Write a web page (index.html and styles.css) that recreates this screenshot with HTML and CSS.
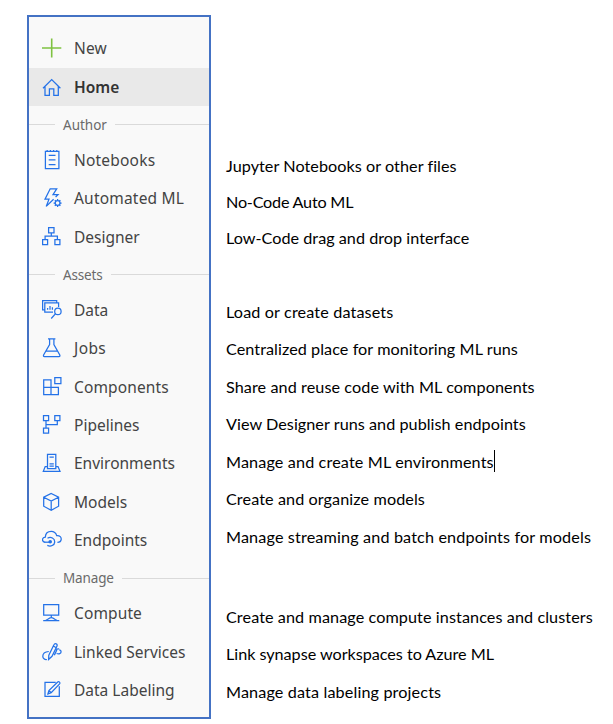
FILE: index.html
```html
<!DOCTYPE html>
<html lang="en">
<head>
<meta charset="utf-8">
<title>Machine Learning navigation</title>
<link rel="stylesheet" href="styles.css">
</head>
<body>
<main class="page">
  <nav class="sidebar">
    <a class="item"><svg class="icon icon-new" viewBox="0 0 20 20"><path d="M0 10H19.3M9.7.4V19.6"/></svg><span class="label w-new">New</span></a>
    <a class="item active"><svg class="icon" viewBox="0 0 20 20"><path d="M1 11.2 9.7 2.6l8.7 8.6M3 9.5v8.8h4.4v-6.5h4.4v6.5h4.5V9.5"/></svg><span class="label w-home">Home</span></a>
    <div class="section"><span class="w-author">Author</span></div>
    <a class="item"><svg class="icon" viewBox="0 0 20 20"><path d="M3.4 1.4H16.9V18.7H3.4zM6.7 5.3h6.8M6.7 9.8h6.8M6.7 14.5h6.8M5.2 0v2M8.4 0v2M11.6 0v2M14.8 0v2"/></svg><span class="label w-notebooks">Notebooks</span></a>
    <a class="item"><svg class="icon" viewBox="0 0 20 20"><path d="M11.6 11.2 4.2 18.4 7 11.2H3L8.2.8h6.5L11 6.6h5L13.6 9"/><circle cx="15.6" cy="15" r="2.4"/><path d="M15.6 11v1.6M15.6 17.4V19M11.6 15h1.6M18 15h1.6M12.8 12.2l1.1 1.1M17.3 16.7l1.1 1.1M18.4 12.2l-1.1 1.1M13.9 16.7l-1.1 1.1"/></svg><span class="label w-automl">Automated ML</span></a>
    <a class="item"><svg class="icon" viewBox="0 0 20 20"><path d="M6.6.7H12V5.9H6.6zM.6 12.7H5.6V17.7H.6zM12.9 12.7H17.9V17.7H12.9zM9.3 5.9V9M3.1 12.7V9H15.4v3.7"/></svg><span class="label w-designer">Designer</span></a>
    <div class="section"><span class="w-assets">Assets</span></div>
    <a class="item"><svg class="icon" viewBox="0 0 20 20"><path d="M2.7 9.8H.6V.7H14.7V2.8M11 12H2.8V2.8H16.6V7M5.6 9.8V8M8 9.8V6M10.4 9.8V7.3"/><circle cx="15.9" cy="11.4" r="3.2"/><path d="M13.6 13.7 9.2 18.5"/></svg><span class="label w-data">Data</span></a>
    <a class="item"><svg class="icon" viewBox="0 0 20 20"><path d="M6 .8h7.4M7.6.8V6.6L1.6 17c-.4.9 0 1.6.8 1.6H17c.8 0 1.2-.7.8-1.6L11.9 6.6V.8M4 13h11.5"/></svg><span class="label w-jobs">Jobs</span></a>
    <a class="item"><svg class="icon" viewBox="0 0 20 20"><path d="M12.8.6H18.9V6.6H12.8zM9 10.3V2.9H1.7V17.6H16.4V10.3H1.7M9 10.3v7.3"/></svg><span class="label w-components">Components</span></a>
    <a class="item"><svg class="icon" viewBox="0 0 20 20"><path d="M1.5.5H6.6V5.5H1.5zM12.8.5H17.9V5.5H12.8zM1.5 13.2H6.6V18.2H1.5zM4 5.5v7.7M4 9.7H15.3V5.5"/></svg><span class="label w-pipelines">Pipelines</span></a>
    <a class="item"><svg class="icon" viewBox="0 0 20 20"><path d="M5.5 15.7V1.4H13.8V15.7zM7.5 4h4.3M7.5 10.8h4.3M7.5 13.2h4.3M5.5 13.5H3.2L1.3 18.3H18L16 13.5H13.8"/></svg><span class="label w-environments">Environments</span></a>
    <a class="item"><svg class="icon" viewBox="0 0 20 20"><path d="M9.2 1.5 16.6 5.2v9L9.2 18.2 1.7 14.2v-9zM1.7 5.2l7.5 3.9 7.4-3.9M9.2 9.1v9.1"/></svg><span class="label w-models">Models</span></a>
    <a class="item"><svg class="icon" viewBox="0 0 20 20"><path d="M3.2 12.4C-.6 11.6-.2 7.3 3.3 7.1 3.6 2.6 5.6 1.4 9.2 1.4c3 0 4.7 1.7 5.5 4.2 3.3-.3 4.7 1.7 4.5 3.8-.2 2-1.3 3-3.8 3M5.5 8.3c3.3-2 7.4.1 7.2 3.8-.2 3.3-4 4.8-7.4 3.3"/><circle class="solid" cx="8.2" cy="11.8" r="1.8"/><path d="M2.5 12.2H8"/></svg><span class="label w-endpoints">Endpoints</span></a>
    <div class="section"><span class="w-manage">Manage</span></div>
    <a class="item"><svg class="icon" viewBox="0 0 20 20"><path d="M1.7 1.6H16.7V12.2H1.7zM9.3 12.2v2.2M1.2 17.6H17.3M3.8 17.2c2.3-.2 3.3-2.7 5.5-2.7s3.2 2.5 5.5 2.7"/></svg><span class="label w-compute">Compute</span></a>
    <a class="item"><svg class="icon" viewBox="0 0 20 20"><path d="M6.8 13.2 11.8 3c.8-1.9 4.2-1.7 3.2 1.1L10 14.3 6.6 17.4zM11.3 4l3 1.8M6.8 9.5c-3.7.3-6 2.2-6 4.7 0 2.2 1.8 3.7 4.1 3.3M12.3 13.2c1.1-2.2 2.2-4 2.7-6.2l2.2-.2M14.6 11.5c2.4.7 4.5.2 4.5-1.7 0-1-.7-1.8-1.8-2"/></svg><span class="label w-linked">Linked Services</span></a>
    <a class="item"><svg class="icon" viewBox="0 0 20 20"><path d="M13.7 2.4H3V16.3H17.3V6.3M5.9 13.9l1-3.4L15.7 2c1.2-1 3 .6 1.9 1.9L9.2 12.6zM6.9 10.5l2.3 2.1"/></svg><span class="label w-labeling">Data Labeling</span></a>
  </nav>
  <section class="notes">
    <div class="group author">
      <p class="n1">Jupyter Notebooks or other files</p>
      <p class="n2">No-Code Auto ML</p>
      <p class="n3">Low-Code drag and drop interface</p>
    </div>
    <div class="group assets">
      <p class="n4">Load or create datasets</p>
      <p class="n5">Centralized place for monitoring ML runs</p>
      <p class="n6">Share and reuse code with ML components</p>
      <p class="n7">View Designer runs and publish endpoints</p>
      <p class="n8">Manage and create ML environments<span class="caret"></span></p>
      <p class="n9">Create and organize models</p>
      <p class="n10">Manage streaming and batch endpoints for models</p>
    </div>
    <div class="group manage">
      <p class="n11">Create and manage compute instances and clusters</p>
      <p class="n12">Link synapse workspaces to Azure ML</p>
      <p class="n13">Manage data labeling projects</p>
    </div>
  </section>
</main>
</body>
</html>
```
FILE: styles.css
```css
* { box-sizing: border-box; }
body { margin: 0; background: #fff; }
.page { display: flex; width: 613px; height: 724px; padding: 15px 0 0 27px; overflow: hidden; }

.sidebar {
  flex: none; width: 184px; height: 704px; padding-top: 12.3px;
  border: 2px solid #4472c4; background: #f9f9f9;
  font-family: "Noto Sans", sans-serif; color: #444;
}
.item { display: flex; align-items: center; gap: 12px; height: 38.33px; padding-left: 13px; font-size: 15.5px; white-space: nowrap; }
.active { background: #e9e9e9; font-weight: 600; color: #333; }
.icon { flex: none; width: 20px; height: 20px; fill: none; stroke: #2472e8; stroke-width: 1.25; }
.icon-new { stroke: #7fc241; stroke-width: 1.6; }
.solid { fill: #2472e8; stroke: none; }
.section { display: flex; align-items: center; gap: 8px; height: 35px; padding-top: 3px; font-size: 13.5px; color: #6a6a6a; }
.section::before, .section::after { content: ""; height: 1px; background: #dadada; }
.section::before { width: 26px; }
.section::after { flex: 1; }
.w-new { letter-spacing: .2px; }
.w-notebooks, .w-automl { letter-spacing: .2px; }
.w-jobs { letter-spacing: .4px; }
.w-components, .w-compute { letter-spacing: .12px; }
.w-assets, .w-manage { letter-spacing: -.15px; }

.notes { padding-left: 15px; font-family: Lato, sans-serif; font-size: 16.2px; font-variant-ligatures: none; color: #000; }
.group p { display: flex; align-items: center; margin: 0; height: 37.5px; white-space: nowrap; }
.author { padding-top: 132.5px; }
.group.author p { height: 36px; }
.assets { padding-top: 37.2px; }
.manage { padding-top: 42.5px; }
.caret { width: 1px; height: 22px; background: #000; }
.n1 { letter-spacing: .05px; }
.n2 { letter-spacing: -.22px; }
.n3 { letter-spacing: .02px; }
.n4 { letter-spacing: .13px; }
.n5 { letter-spacing: .06px; }
.n6 { letter-spacing: .08px; }
.n7 { letter-spacing: .04px; }
.n8 { letter-spacing: .13px; }
.n9 { letter-spacing: .09px; }
.n10 { letter-spacing: .14px; }
.n11 { letter-spacing: .085px; }
.n12 { letter-spacing: -.03px; }
.n13 { letter-spacing: .13px; }
```
